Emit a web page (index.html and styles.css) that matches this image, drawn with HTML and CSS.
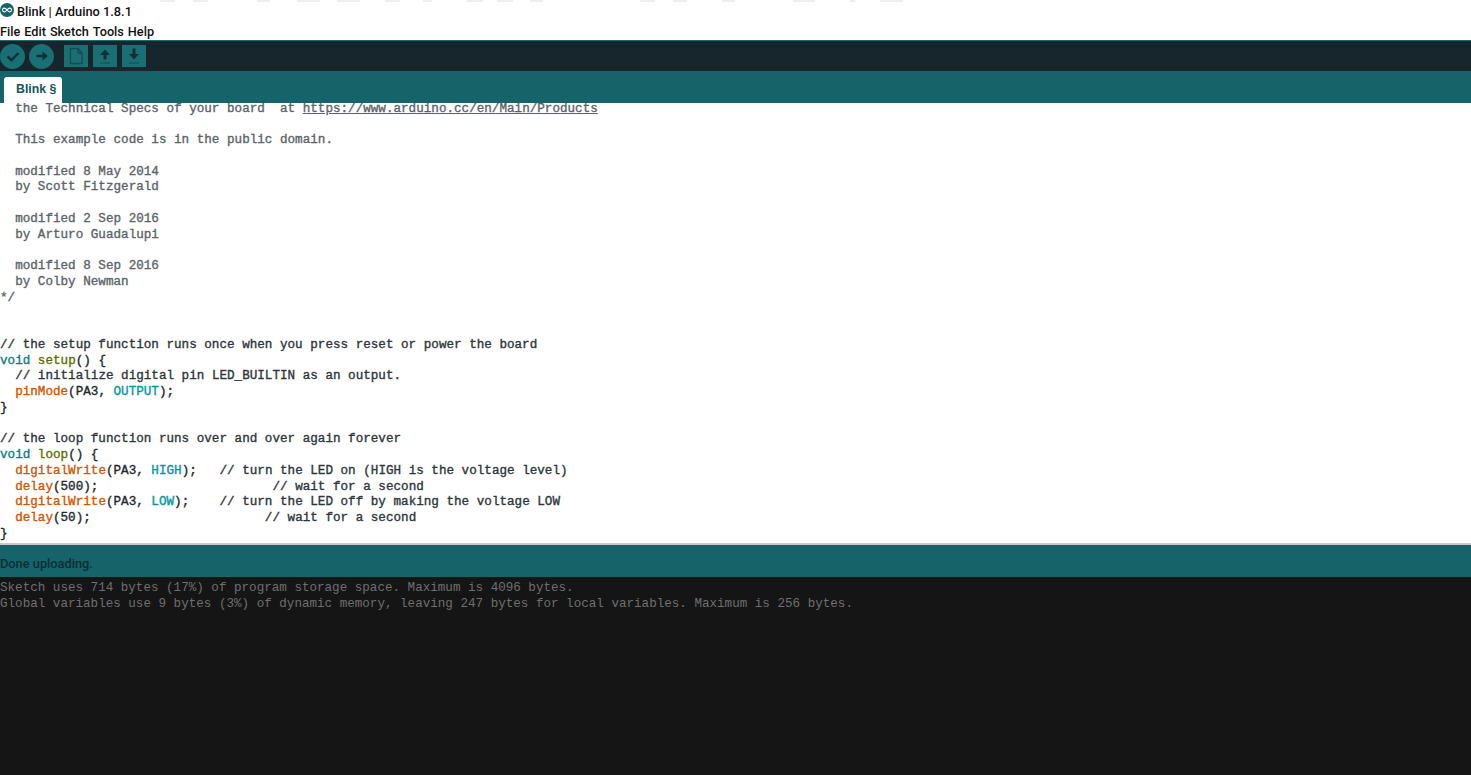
FILE: index.html
```html
<!DOCTYPE html>
<html lang="en">
<head>
<meta charset="utf-8">
<title>Blink | Arduino 1.8.1</title>
<link rel="stylesheet" href="styles.css">
</head>
<body>
<div class="app">
  <svg class="residue" width="1000" height="3" aria-hidden="true">
    <path d="M160 0h15v2h-15zM193 0h15v2h-15zM257 0h13v2h-13zM297 0h23v2h-23zM337 0h23v2h-23zM385 0h15v2h-15zM423 0h9v2h-9zM467 0h16v2h-16zM497 0h16v2h-16zM530 0h13v2h-13zM640 0h15v2h-15zM673 0h14v2h-14zM722 0h13v2h-13zM793 0h22v2h-22zM850 0h5v2h-5zM880 0h23v2h-23z" fill="#eeeeee"/>
  </svg>
  <header class="titlebar">
    <svg class="logo" viewBox="0 0 15 15" aria-hidden="true">
      <circle cx="7.500" cy="7.500" r="7.500" fill="#17636a"/>
      <path d="M7.500 7.500c-1-1.300-1.700-2-2.800-2a2 2 0 0 0 0 4c1.100 0 1.800-.7 2.800-2zm0 0c1 1.300 1.700 2 2.800 2a2 2 0 0 0 0-4c-1.100 0-1.800.7-2.800 2z" fill="none" stroke="#fff" stroke-width="1.100"/>
    </svg>
    <span>Blink | Arduino 1.8.1</span>
  </header>
  <nav class="menubar">
    <span>File</span><span>Edit</span><span>Sketch</span><span>Tools</span><span>Help</span>
  </nav>
  <div class="toolbar">
    <div class="round-btn">
      <svg viewBox="0 0 24 24" width="24" height="24" aria-hidden="true"><path d="M6.500 12.500l4 3.500 7-7" fill="none" stroke="#12303a" stroke-width="2.400"/></svg>
    </div>
    <div class="round-btn">
      <svg viewBox="0 0 24 24" width="24" height="24" aria-hidden="true"><path d="M6.500 10.800h6V7.500l5.500 4.500-5.500 4.500v-3.300h-6z" fill="#12303a"/></svg>
    </div>
    <div class="square-btn first-square">
      <svg viewBox="0 0 24 24" width="24" height="24" aria-hidden="true"><path d="M6.500 4.500h7.500l4 4.500v10.500H6.500zM14 4.500V9h4" fill="none" stroke="#174a52" stroke-width="1.300"/></svg>
    </div>
    <div class="square-btn">
      <svg viewBox="0 0 24 24" width="24" height="24" aria-hidden="true"><path d="M12 5.500l5 5.500h-3.500v4.500h-3V11H7z" fill="#12303a"/><path d="M7 19h10" stroke="#174a52" stroke-width="1"/></svg>
    </div>
    <div class="square-btn">
      <svg viewBox="0 0 24 24" width="24" height="24" aria-hidden="true"><path d="M10.500 4.500h3V10H17l-5 5.500L7 10h3.500z" fill="#12303a"/><path d="M7 19h10" stroke="#174a52" stroke-width="1"/></svg>
    </div>
  </div>
  <div class="tabbar"><div class="tab">Blink §</div></div>
  <div class="editor"><pre class="code"><span class="gray">  the Technical Specs of your board  at <u>https://www.arduino.cc/en/Main/Products</u>

  This example code is in the public domain.

  modified 8 May 2014
  by Scott Fitzgerald

  modified 2 Sep 2016
  by Arturo Guadalupi

  modified 8 Sep 2016
  by Colby Newman
*/</span>


<span class="dark">// the setup function runs once when you press reset or power the board</span>
<span class="kw">void</span> <span class="fn">setup</span>() {
  <span class="dark">// initialize digital pin LED_BUILTIN as an output.</span>
  <span class="call">pinMode</span>(PA3, <span class="const">OUTPUT</span>);
}

<span class="dark">// the loop function runs over and over again forever</span>
<span class="kw">void</span> <span class="fn">loop</span>() {
  <span class="call">digitalWrite</span>(PA3, <span class="const">HIGH</span>);   <span class="dark">// turn the LED on (HIGH is the voltage level)</span>
  <span class="call">delay</span>(500);                       <span class="dark">// wait for a second</span>
  <span class="call">digitalWrite</span>(PA3, <span class="const">LOW</span>);    <span class="dark">// turn the LED off by making the voltage LOW</span>
  <span class="call">delay</span>(50);                       <span class="dark">// wait for a second</span>
}</pre></div>
  <div class="divider"></div>
  <div class="status">Done uploading.</div>
  <pre class="console">Sketch uses 714 bytes (17%) of program storage space. Maximum is 4096 bytes.
Global variables use 9 bytes (3%) of dynamic memory, leaving 247 bytes for local variables. Maximum is 256 bytes.</pre>
</div>
</body>
</html>
```
FILE: styles.css
```css
* { box-sizing: border-box; }
html, body { margin: 0; height: 100%; overflow: hidden; background: #fff; }
.app { position: relative; display: flex; flex-direction: column; height: 775px; font-family: Roboto, "Noto Sans", sans-serif; color: #111; }
.residue { position: absolute; top: 0; left: 0; }
.titlebar { height: 20px; display: flex; align-items: center; gap: 3px; padding-top: 2px; font-size: 12.8px; font-weight: 500; white-space: nowrap; }
.logo { width: 14px; height: 14px; margin-top: -3px; flex: none; }
.menubar { height: 20px; display: flex; align-items: center; gap: 4px; font-size: 12.7px; font-weight: 500; padding-top: 2px; }
.toolbar { height: 31px; display: flex; align-items: center; gap: 5px; background: #17262c; border-top: 1px solid #1d6a72; }
.round-btn { width: 25px; height: 25px; border-radius: 50%; background: #1a6f75; display: flex; align-items: center; justify-content: center; flex: none; }
.round-btn:first-child { margin-right: -1px; }
.square-btn { width: 24px; height: 22px; background: #1a6f75; display: flex; align-items: center; justify-content: center; flex: none; overflow: hidden; }
.first-square { margin-left: 5px; }
.tabbar { height: 32px; background: #17636a; padding: 6px 0 0 4px; display: flex; }
.tab { width: 58px; height: 26px; background: #fff; border-radius: 3px 3px 0 0; padding: 4px 0 0 12px; font: bold 12.3px "Liberation Sans", sans-serif; color: #17535c; line-height: 16px; white-space: nowrap; }
.editor { height: 440px; overflow: hidden; background: #fff; }
.code { margin: -2.5px 0 0; color: #20282c; font: 12.62px/15.75px "Liberation Mono", monospace; -webkit-text-stroke: 0.35px currentColor; }
.gray { color: #5a6468; }
.dark { color: #2c3539; }
.kw { color: #0c7c84; }
.fn { color: #5e6d03; }
.call { color: #d35400; }
.const { color: #00979c; }
.divider { height: 2px; background: #c9c9c9; }
.status { height: 32px; background: #17636a; font-size: 12.8px; font-weight: 500; line-height: 37px; color: #082f38; }
.console { margin: 0; flex: 1; background: #151515; color: #6f6f6f; font: 12.58px/15.75px "Liberation Mono", monospace; padding-top: 4px; }
```
